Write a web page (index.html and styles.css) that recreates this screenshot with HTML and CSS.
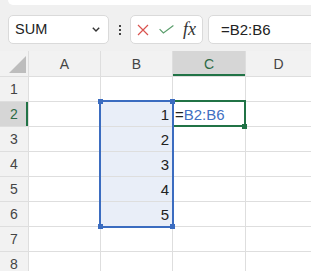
FILE: index.html
```html
<!DOCTYPE html>
<html>
<head>
<meta charset="utf-8">
<link rel="stylesheet" href="styles.css">
</head>
<body>
<div class="ribbon"><span class="ribbon-text">ホーム 挿入 数式</span></div>
<div class="toolbar">
  <div class="namebox">
    <span>SUM</span>
    <svg class="chev" width="8" height="5" viewBox="0 0 8 5"><path d="M0.8 0.8 L4 4 L7.2 0.8" fill="none" stroke="#333" stroke-width="1.4"/></svg>
  </div>
  <div class="dots"><i></i><i></i><i></i></div>
  <div class="fbtns">
    <svg width="12" height="12" viewBox="0 0 12 12"><path d="M1 1 L11 11 M11 1 L1 11" stroke="#d9534f" stroke-width="1.2" fill="none"/></svg>
    <svg width="15" height="9" viewBox="0 0 15 9"><path d="M0.6 4.2 L4.4 8 L14.4 0.6" stroke="#5b9e6c" stroke-width="1.2" fill="none"/></svg>
    <span class="fx">fx</span>
  </div>
  <div class="finput">=B2:B6</div>
</div>
<div class="sheet">
  <div class="grid">
    <div class="hd corner"><span class="tri"></span></div>
    <div class="hd">A</div>
    <div class="hd">B</div>
    <div class="hd hsel">C</div>
    <div class="hd">D</div>

    <div class="rh">1</div><div class="c"></div><div class="c"></div><div class="c"></div><div class="c"></div>
    <div class="rh rsel">2</div><div class="c"></div><div class="c sel num">1</div><div class="c txt"><span class="eq">=</span><span class="ref">B2:B6</span></div><div class="c"></div>
    <div class="rh">3</div><div class="c"></div><div class="c sel num">2</div><div class="c"></div><div class="c"></div>
    <div class="rh">4</div><div class="c"></div><div class="c sel num">3</div><div class="c"></div><div class="c"></div>
    <div class="rh">5</div><div class="c"></div><div class="c sel num">4</div><div class="c"></div><div class="c"></div>
    <div class="rh">6</div><div class="c"></div><div class="c sel num">5</div><div class="c"></div><div class="c"></div>
    <div class="rh">7</div><div class="c"></div><div class="c"></div><div class="c"></div><div class="c"></div>
    <div class="rh">8</div><div class="c"></div><div class="c"></div><div class="c"></div><div class="c"></div>
  </div>
  <div class="active"></div>
  <div class="range"></div>
  <div class="h h-tl"></div>
  <div class="h h-tr"></div>
  <div class="h h-bl"></div>
  <div class="h h-br"></div>
  <div class="fill"></div>
</div>
</body>
</html>
```
FILE: styles.css
```css
html, body {
  margin: 0;
  padding: 0;
  background: #f0f0f0;
  font-family: "Liberation Sans", Arial, sans-serif;
  overflow: hidden;
}

.ribbon {
  margin-left: 8px;
  height: 5px;
  background: #fff;
  border-radius: 0 0 0 6px;
  overflow: hidden;
}
.ribbon-text {
  display: block;
  padding-left: 70px;
  margin-top: -13px;
  font-family: "Noto Sans CJK JP", sans-serif;
  font-size: 12px;
  line-height: 14px;
  color: #333;
}

.toolbar {
  display: flex;
  align-items: stretch;
  height: 29px;
  margin-top: 10px;
  padding-left: 8px;
}
.namebox {
  box-sizing: border-box;
  width: 101px;
  background: #fff;
  border: 1px solid #dadada;
  border-radius: 5px;
  display: flex;
  align-items: center;
  justify-content: space-between;
  padding: 0 8px 1px 6px;
  font-size: 14.5px;
  color: #222;
}
.chev { margin-top: 1px; }
.dots {
  width: 21px;
  display: flex;
  flex-direction: column;
  align-items: center;
  justify-content: center;
  gap: 2px;
  padding-left: 1px;
  box-sizing: border-box;
}
.dots i {
  display: block;
  width: 2px;
  height: 2px;
  background: #444;
}
.fbtns {
  box-sizing: border-box;
  width: 73px;
  background: #fff;
  border: 1px solid #dadada;
  border-radius: 5px;
  display: flex;
  align-items: center;
  padding-left: 6px;
  gap: 10px;
}
.fx {
  font-family: "Liberation Serif", serif;
  font-style: italic;
  font-size: 18px;
  color: #333;
  margin-left: -1px;
  line-height: 1;
  margin-top: -2px;
}
.finput {
  flex: 1;
  margin-left: 5px;
  margin-right: -10px;
  background: #fff;
  border: 1px solid #dadada;
  border-radius: 5px;
  display: flex;
  align-items: center;
  padding-left: 12px;
  font-size: 15px;
  color: #222;
}

.sheet {
  position: relative;
  margin-top: 7px;
}
.grid {
  display: grid;
  grid-template-columns: 28px 71px 71px 72px 1fr;
  grid-template-rows: 25px repeat(8, 24px);
  gap: 1px;
  background: #dedede;
}
.hd, .rh {
  background: #f2f2f2;
  color: #444;
  font-size: 14px;
  display: flex;
  align-items: center;
  justify-content: center;
}
.corner {
  position: relative;
}
.tri {
  position: absolute;
  right: 2px;
  bottom: 3px;
  width: 0;
  height: 0;
  border-left: 17px solid transparent;
  border-bottom: 17px solid #bdbdbd;
}
.hsel {
  background: #d6d6d6;
  color: #2d6a45;
  box-shadow: inset 0 -2px 0 #217346;
}
.rsel {
  background: #d6d6d6;
  color: #2d6a45;
  box-shadow: inset -2px 0 0 #217346;
}
.c {
  background: #fff;
  font-size: 15px;
  color: #222;
  display: flex;
  align-items: center;
}
.sel { background: #e9eef8; }
.num {
  justify-content: flex-end;
  padding-right: 3px;
}
.txt { padding-left: 2px; }
.eq { color: #222; }
.ref { color: #3f6fc2; }

.active {
  position: absolute;
  left: 172px;
  top: 49px;
  width: 74px;
  height: 27px;
  box-sizing: border-box;
  border: 2px solid #217346;
}
.range {
  position: absolute;
  left: 99px;
  top: 49px;
  width: 75px;
  height: 128px;
  box-sizing: border-box;
  border: 2px solid #3b6cc0;
}
.h {
  position: absolute;
  width: 5px;
  height: 5px;
  background: #3b6cc0;
}
.h-tl { left: 98px; top: 48px; }
.h-tr { left: 170px; top: 48px; }
.h-bl { left: 98px; top: 173px; }
.h-br { left: 170px; top: 173px; }
.fill {
  position: absolute;
  left: 242px;
  top: 73px;
  width: 5px;
  height: 5px;
  background: #217346;
}
```
